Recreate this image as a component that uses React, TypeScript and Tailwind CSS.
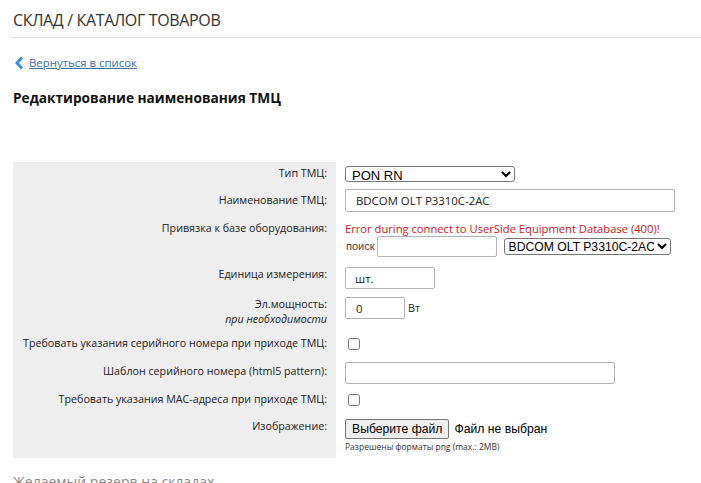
import React from 'react';

const label = "text-right pr-[9px] text-[10.7px] leading-[15px] text-[#222]";

const Row: React.FC<{ h: string; pt: string; labelText: React.ReactNode; children: React.ReactNode; cpt: string }> = ({ h, pt, labelText, children, cpt }) => (
    <div className={`flex ${h}`}>
        <div className={`w-[323px] shrink-0 bg-[#eeeeee] ${pt} ${label}`}>{labelText}</div>
        <div className={`flex-1 pl-[9px] ${cpt}`}>{children}</div>
    </div>
);

const textInput = "block border border-[#b5b5b5] rounded-[2px] bg-white outline-none";

export default function App() {
    return (
        <div className="bg-white font-['Open_Sans',sans-serif] text-[#222] overflow-hidden h-[483px]">
            <div className="pl-[13px] pt-[9px]">
                <div className="text-[16px] leading-[22px] text-[#333] tracking-[-0.35px]">СКЛАД / КАТАЛОГ ТОВАРОВ</div>
            </div>
            <div className="ml-[12px] mt-[6px] border-t border-[#e0e0e0]"></div>

            <div className="pl-[14px] mt-[17px] flex items-center gap-[5px] h-[16px]">
                <svg width="10" height="14" viewBox="0 0 10 14">
                    <path d="M8 1.5 L3 7 L8 12.5" fill="none" stroke="#3a8fe0" strokeWidth="3" strokeLinejoin="miter" />
                </svg>
                <a href="#" className="text-[11.4px] leading-[16px] text-[#3a6ea5] underline">Вернуться в список</a>
            </div>

            <div className="pl-[13px] mt-[17px] text-[13.7px] leading-[20px] font-bold text-[#111]">Редактирование наименования ТМЦ</div>

            <div className="ml-[13px] mt-[54px] w-[688px]">
                <Row h="h-[23px]" pt="pt-[4px]" cpt="pt-[4px]" labelText="Тип ТМЦ:">
                    <select className="block w-[170px] h-[16px] border border-[#767676] rounded-[3px] font-['Liberation_Sans',sans-serif] text-[13px] leading-[14px] text-black pl-[2px] bg-white">
                        <option>PON RN</option>
                    </select>
                </Row>
                <Row h="h-[30px]" pt="pt-[8px]" cpt="pt-[4px]" labelText="Наименование ТМЦ:">
                    <input className={`${textInput} w-[330px] h-[23px] pl-[10px] text-[11.4px]`} defaultValue="BDCOM OLT P3310C-2AC" />
                </Row>
                <Row h="h-[46px]" pt="pt-[6px]" cpt="pt-[6px]" labelText="Привязка к базе оборудования:">
                    <div className="text-[11.2px] leading-[15px] font-medium text-[#d01818]">Error during connect to UserSide Equipment Database (400)!</div>
                    <div className="flex items-center mt-[0px] h-[21px]">
                        <span className="font-['Liberation_Sans',sans-serif] text-[11px] pl-[1px] pr-[2px] text-[#444]">поиск</span>
                        <input className={`${textInput} w-[120px] h-[21px]`} />
                        <select className="ml-[7px] block w-[167px] h-[17px] border border-[#767676] rounded-[3px] font-['Liberation_Sans',sans-serif] text-[12.2px] leading-[14px] text-black pl-0 bg-white">
                            <option>BDCOM OLT P3310C-2AC</option>
                        </select>
                    </div>
                </Row>
                <Row h="h-[32px]" pt="pt-[6px]" cpt="pt-[6px]" labelText="Единица измерения:">
                    <input className={`${textInput} w-[90px] h-[22px] pl-[9px] text-[11.4px]`} defaultValue="шт." />
                </Row>
                <Row h="h-[38px]" pt="pt-[4px]" cpt="pt-[4px]" labelText={<><div>Эл.мощность:</div><div className="italic">при необходимости</div></>}>
                    <div className="flex items-center">
                        <input className={`${textInput} w-[60px] h-[22px] pl-[10px] text-[11.4px]`} defaultValue="0" />
                        <span className="ml-[3px] text-[10.7px]">Вт</span>
                    </div>
                </Row>
                <Row h="h-[25px]" pt="pt-[5px]" cpt="pt-[7px]" labelText="Требовать указания серийного номера при приходе ТМЦ:">
                    <input type="checkbox" className="block ml-[3px] w-[12px] h-[12px] m-0" />
                </Row>
                <Row h="h-[31px]" pt="pt-[8px]" cpt="pt-[6px]" labelText="Шаблон серийного номера (html5 pattern):">
                    <input className={`${textInput} w-[270px] h-[22px]`} />
                </Row>
                <Row h="h-[24px]" pt="pt-[5px]" cpt="pt-[7px]" labelText="Требовать указания MAC-адреса при приходе ТМЦ:">
                    <input type="checkbox" className="block ml-[3px] w-[12px] h-[12px] m-0" />
                </Row>
                <Row h="h-[47px]" pt="pt-[8px]" cpt="pt-[8px]" labelText="Изображение:">
                    <div className="flex items-center font-['Liberation_Sans',sans-serif] text-[12.2px]">
                        <span className="inline-block border border-[#767676] rounded-[2px] bg-[#efefef] px-[6px] h-[20px] leading-[18px] text-black">Выберите файл</span>
                        <span className="ml-[5px] text-black">Файл не выбран</span>
                    </div>
                    <div className="text-[8.5px] leading-[12px] mt-[2px] text-[#333]">Разрешены форматы png (max.: 2MB)</div>
                </Row>
            </div>

            <div className="pl-[13px] mt-[14px] text-[14px] leading-[20px] text-[#888]">Желаемый резерв на складах</div>
        </div>
    );
}
